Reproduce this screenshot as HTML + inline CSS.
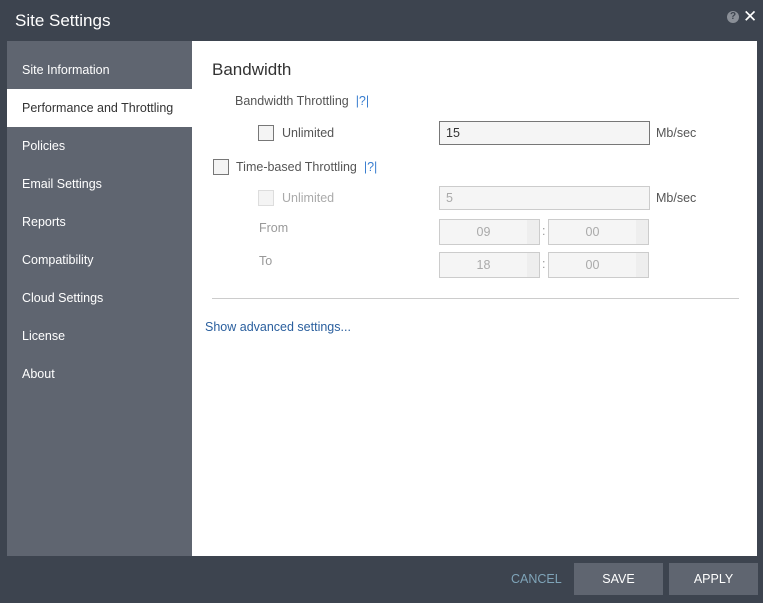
<!DOCTYPE html>
<html><head><style>
*{margin:0;padding:0;box-sizing:border-box}
body{width:763px;height:603px;background:#3d444f;font-family:"Liberation Sans",sans-serif;position:relative;overflow:hidden}
.abs{position:absolute}
.title{left:15px;top:11px;color:#fff;font-size:17px}
.side{left:7px;top:41px;width:185px;height:515px;background:#5f6570}
.item{position:absolute;left:0;width:185px;height:38px;line-height:38px;padding-left:15px;color:#fff;font-size:12.5px}
.item.sel{background:#fff;color:#333}
.main{left:192px;top:41px;width:565px;height:515px;background:#fff}
.t{position:absolute;font-size:12.5px;color:#555}
.cb{position:absolute;width:16px;height:16px;border:1px solid #777;background:#f4f4f4}
.inp{position:absolute;height:24px;border:1px solid #ccc;background:#f5f5f5;font-size:12.5px;color:#aaa;padding-left:6px;line-height:22px}
.sp{position:absolute;height:26px;width:101px;border:1px solid #ccc;background:#f5f5f5;font-size:12.5px;color:#aaa;text-align:center;line-height:24px;padding-right:12px}
.sp:after{content:"";position:absolute;right:0;top:0;width:12px;height:24px;background:#eee}
.btn{position:absolute;top:563px;height:32px;width:89px;background:#5f6570;color:#fff;font-size:12.5px;text-align:center;line-height:32px}
.q{color:#3b7fd0}
</style></head><body>
<div class="abs title">Site Settings</div>
<div class="abs" style="left:727px;top:11px;width:12px;height:12px;border-radius:50%;background:#8a8f97;color:#3d444f;font-size:10px;font-weight:bold;text-align:center;line-height:12px">?</div>
<div class="abs" style="left:743px;top:7px;color:#fff;font-size:17px">✕</div>
<div class="abs side">
<div class="item" style="top:10px">Site Information</div>
<div class="item sel" style="top:48px">Performance and Throttling</div>
<div class="item" style="top:86px">Policies</div>
<div class="item" style="top:124px">Email Settings</div>
<div class="item" style="top:162px">Reports</div>
<div class="item" style="top:200px">Compatibility</div>
<div class="item" style="top:238px">Cloud Settings</div>
<div class="item" style="top:276px">License</div>
<div class="item" style="top:314px">About</div>
</div>
<div class="abs main"></div>
<div class="t" style="left:212px;top:60px;font-size:17px;color:#333">Bandwidth</div>
<div class="t" style="left:235px;top:94px">Bandwidth Throttling &nbsp;<span class="q">|?|</span></div>
<div class="cb" style="left:258px;top:125px"></div>
<div class="t" style="left:282px;top:126px">Unlimited</div>
<div class="inp" style="left:439px;top:121px;width:211px;border-color:#777;color:#333">15</div>
<div class="t" style="left:656px;top:126px">Mb/sec</div>
<div class="cb" style="left:213px;top:159px"></div>
<div class="t" style="left:236px;top:160px">Time-based Throttling &nbsp;<span class="q">|?|</span></div>
<div class="cb" style="left:258px;top:190px;border-color:#ddd"></div>
<div class="t" style="left:282px;top:191px;color:#aaa">Unlimited</div>
<div class="inp" style="left:439px;top:186px;width:211px">5</div>
<div class="t" style="left:656px;top:191px">Mb/sec</div>
<div class="t" style="left:259px;top:221px;color:#999">From</div>
<div class="sp" style="left:439px;top:219px">09</div>
<div class="t" style="left:542px;top:224px;color:#999">:</div>
<div class="sp" style="left:548px;top:219px">00</div>
<div class="t" style="left:259px;top:254px;color:#999">To</div>
<div class="sp" style="left:439px;top:252px">18</div>
<div class="t" style="left:542px;top:257px;color:#999">:</div>
<div class="sp" style="left:548px;top:252px">00</div>
<div class="abs" style="left:212px;top:298px;width:527px;height:1px;background:#ccc"></div>
<div class="t" style="left:205px;top:320px;color:#2a5f9e">Show advanced settings...</div>
<div class="abs" style="left:511px;top:572px;color:#7fa4b8;font-size:12.5px">CANCEL</div>
<div class="btn" style="left:574px">SAVE</div>
<div class="btn" style="left:669px">APPLY</div>
</body></html>
